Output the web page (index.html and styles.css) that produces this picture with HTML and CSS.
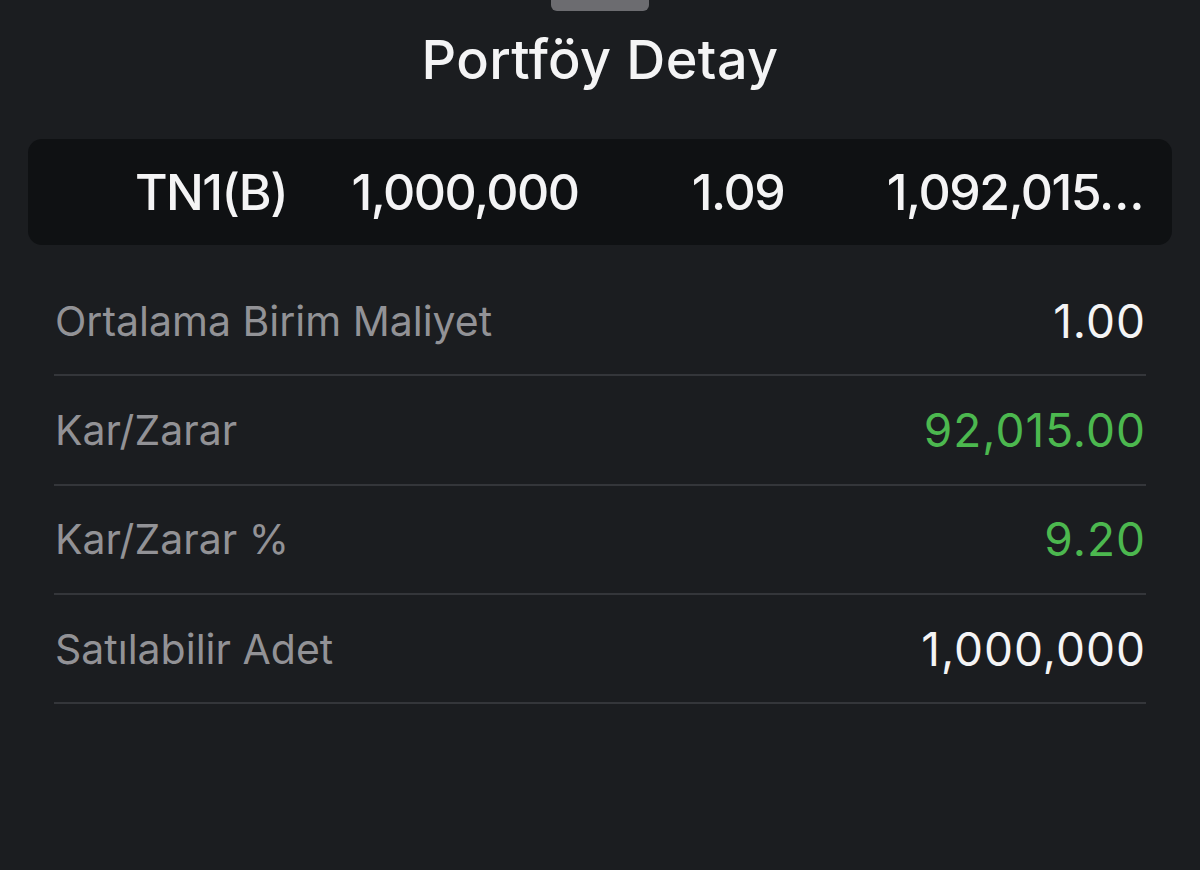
FILE: index.html
```html
<!DOCTYPE html>
<html lang="tr">
  <head>
    <meta charset="UTF-8" />
    <meta name="viewport" content="width=device-width, initial-scale=1.0" />
    <title>Portföy Detay</title>
    <link rel="stylesheet" href="styles.css">
  </head>

  <body>
    <div class="sheet">
      <div class="handle"></div>
      <h2 class="title">Portföy Detay</h2>

      <div class="summary">
        <span class="cell c1">TN1(B)</span>
        <span class="cell c2">1,000,000</span>
        <span class="cell c3">1.09</span>
        <span class="cell c4">1,092,015…</span>
      </div>

      <div class="details">
        <div class="row">
          <span class="label">Ortalama Birim Maliyet</span>
          <span class="value">1.00</span>
        </div>
        <div class="row">
          <span class="label">Kar/Zarar</span>
          <span class="value up">92,015.00</span>
        </div>
        <div class="row">
          <span class="label">Kar/Zarar %</span>
          <span class="value up">9.20</span>
        </div>
        <div class="row">
          <span class="label">Satılabilir Adet</span>
          <span class="value">1,000,000</span>
        </div>
      </div>
    </div>
  </body>
</html>
```

FILE: styles.css
```css
body {
  margin: 0;
  padding: 0;
  font-family: Inter, "Noto Sans", sans-serif;
  background-color: #1b1d20;
  color: #f4f4f5;
}

.sheet {
  height: 870px;
  padding: 0 28px;
}

.handle {
  width: 98px;
  height: 11px;
  margin: 0 auto;
  border-radius: 0 0 6px 6px;
  background-color: #6c6c70;
}

.title {
  height: 128px;
  margin: 0;
  padding-bottom: 32px;
  box-sizing: border-box;
  display: flex;
  justify-content: center;
  align-items: center;
  font-size: 54px;
  font-weight: 500;
  letter-spacing: 0.4px;
}

.summary {
  height: 106px;
  display: grid;
  grid-template-columns: 304px 266px 280px 294px;
  align-items: center;
  border-radius: 14px;
  background-color: #0f1113;
  font-size: 50px;
  font-weight: 500;
  letter-spacing: -1.5px;
}

.cell {
  text-align: center;
  white-space: nowrap;
}

.c1 {
  padding-left: 62px;
}

.c4 {
  text-align: right;
  padding-right: 29px;
}

.details {
  margin: 22px 26px 0;
}

.row {
  height: 107.3px;
  display: flex;
  justify-content: space-between;
  align-items: center;
  border-bottom: 2px solid #34363a;
}

.label {
  padding-left: 1px;
  font-size: 41px;
  color: #929296;
}

.value {
  font-size: 46px;
  letter-spacing: 1px;
  color: #f4f4f5;
}

.value.up {
  color: #4cb84f;
}
```
